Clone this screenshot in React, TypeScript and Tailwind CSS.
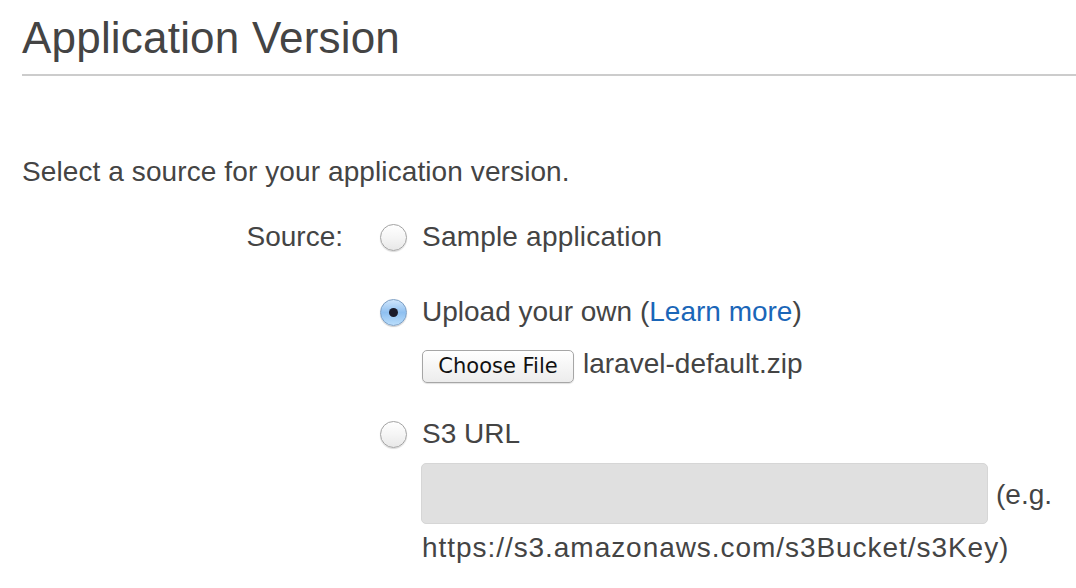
import React from "react";

function Radio({ checked }: { checked?: boolean }) {
  if (checked) {
    return (
      <span className="relative flex h-[27px] w-[27px] shrink-0 items-center justify-center rounded-full border border-[#7d9fc4] bg-gradient-to-b from-[#cfe5fb] via-[#8fc0f0] to-[#b9ddfb] shadow-[0_1px_1px_rgba(0,0,0,0.2)]">
        <span className="h-[9px] w-[9px] rounded-full bg-[#1b1b2a]" />
      </span>
    );
  }
  return (
    <span className="block h-[27px] w-[27px] shrink-0 rounded-full border border-[#a3a3a3] bg-gradient-to-b from-[#ffffff] via-[#f5f5f5] to-[#e8e8e8] shadow-[0_1px_1px_rgba(0,0,0,0.15)]" />
  );
}

export default function App() {
  const font = { fontFamily: '"Liberation Sans", Arial, sans-serif' };
  return (
    <div className="h-[588px] w-[1076px] overflow-hidden bg-white text-[#444444]" style={font}>
      <div className="pl-[22px]">
        <h1 className="border-b-2 border-[#cccccc] pt-[14px] pb-[12px] text-[44px] leading-[48px] font-normal tracking-[0.2px] text-[#444444]">
          Application Version
        </h1>
      </div>
      <p className="mt-[80px] pl-[22px] text-[28px] leading-[32px] tracking-[0.1px]">
        Select a source for your application version.
      </p>
      <div className="mt-[33px] flex pl-[22px]">
        <div className="w-[321px] shrink-0 text-right text-[28px] leading-[32px]">Source:</div>
        <div className="ml-[37px] flex flex-col">
          <div className="flex h-[32px] items-center gap-[15px]">
            <Radio />
            <span className="text-[28px] leading-[32px] tracking-[0.2px]">Sample application</span>
          </div>
          <div className="mt-[43px] flex h-[32px] items-center gap-[15px]">
            <Radio checked />
            <span className="text-[28px] leading-[32px]">
              Upload your own (<span className="text-[#1a66b8]">Learn more</span>)
            </span>
          </div>
          <div className="mt-[22px] flex items-center pl-[42px]">
            <span
              className="flex h-[33px] w-[152px] items-center justify-center rounded-[5px] border border-[#a6a6a6] bg-gradient-to-b from-[#ffffff] to-[#ececec] text-[21px] text-[#111111] shadow-[0_1px_1px_rgba(0,0,0,0.12)]"
              style={{ fontFamily: '"DejaVu Sans", Verdana, sans-serif' }}
            >
              Choose File
            </span>
            <span className="ml-[9px] -mt-[6px] text-[28px] leading-[32px]">laravel-default.zip</span>
          </div>
          <div className="mt-[35px] flex h-[32px] items-center gap-[15px]">
            <Radio />
            <span className="text-[28px] leading-[32px]">S3 URL</span>
          </div>
          <div className="mt-[13px] flex items-end pl-[41px]">
            <div className="h-[61px] w-[567px] rounded-[5px] border border-[#d6d6d6] bg-[#e0e0e0]" />
            <span className="mb-[13px] ml-[8px] text-[28px] leading-[32px]">(e.g.</span>
          </div>
          <div className="mt-[8px] pl-[42px] text-[28px] leading-[32px] tracking-[0.95px]">
            https://s3.amazonaws.com/s3Bucket/s3Key)
          </div>
        </div>
      </div>
    </div>
  );
}
